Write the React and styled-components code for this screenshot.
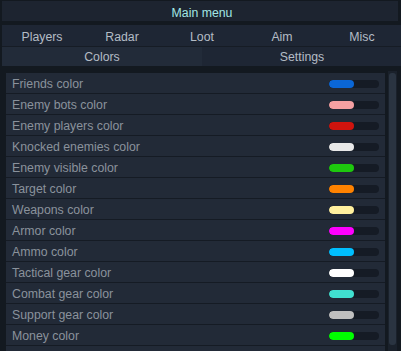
import React from "react";
import styled, {createGlobalStyle} from "styled-components";

const GlobalStyle = createGlobalStyle`
  html, body {
    margin: 0;
    padding: 0;
    background: #131920;
  }
  * {
    box-sizing: border-box;
  }
`;

const Window = styled.div`
  width: 401px;
  height: 351px;
  overflow: hidden;
  background-color: #131920;
  font-family: "Liberation Sans", Arial, sans-serif;
  font-size: 12.3px;
  display: flex;
  flex-direction: column;
`;

const TitleBar = styled.div`
  margin: 1px 0 0 2px;
  width: 396px;
  height: 20px;
  background-color: #1d2430;
  color: #a3e6e4;
  display: flex;
  align-items: center;
  justify-content: center;
  padding: 3px 0 0 4px;
`;

const TabRow = styled.div`
  margin: 4px 0 0 2px;
  width: 400px;
  height: ${({h}) => h}px;
  padding-top: ${({pt}) => pt}px;
  display: grid;
  grid-template-columns: repeat(${({cols}) => cols}, 1fr);
  background-color: #1e2634;
  border-bottom: ${({line}) => (line ? "1px solid #161c25" : "none")};
`;

const SubTabRow = styled(TabRow)`
  margin-top: 0;
  padding-top: 0;
`;

const Tab = styled.div`
  display: flex;
  align-items: center;
  justify-content: center;
  color: #b4bcc5;
  padding-top: 1px;
  background-color: ${({active}) => (active ? "#222b39" : "transparent")};
`;

const Body = styled.div`
  flex: 1;
  display: flex;
  gap: 3px;
  margin-top: 5px;
  padding-left: 6px;
  min-height: 0;
`;

const List = styled.div`
  width: 379px;
  overflow: hidden;
  background-color: #222a37;
  border-top: 2px solid #131920;
`;

const Row = styled.div`
  height: 21px;
  display: flex;
  align-items: center;
  justify-content: space-between;
  padding: 2px 6px 0 6px;
  background-color: #222a37;
  border-bottom: 1px solid #151b24;
  color: #8a929c;
`;

const Swatch = styled.div`
  width: 50px;
  height: 8px;
  margin-top: -1px;
  border-radius: 4px;
  background-color: #151b25;
  overflow: hidden;
  display: flex;
`;

const SwatchFill = styled.div`
  width: 25px;
  height: 100%;
  border-radius: 4px;
  background-color: ${({color}) => color};
`;

const ScrollTrack = styled.div`
  width: 9px;
  background-color: #1a212b;
  padding: 2px 1px;
`;

const ScrollThumb = styled.div`
  height: 272px;
  border-radius: 3px;
  background-color: #2a3441;
`;

const tabs = ["Players", "Radar", "Loot", "Aim", "Misc"];

const colors = [
  ["Friends color", "#0a66d6"],
  ["Enemy bots color", "#f5a0a2"],
  ["Enemy players color", "#d0140e"],
  ["Knocked enemies color", "#e8e8e8"],
  ["Enemy visible color", "#1ec80e"],
  ["Target color", "#ff8200"],
  ["Weapons color", "#fff09e"],
  ["Armor color", "#ff00ff"],
  ["Ammo color", "#00bfff"],
  ["Tactical gear color", "#ffffff"],
  ["Combat gear color", "#40e0d0"],
  ["Support gear color", "#c0c0c0"],
  ["Money color", "#00ff00"],
];

export default function App() {
  return (
    <>
      <GlobalStyle />
      <Window>
        <TitleBar>Main menu</TitleBar>
        <TabRow cols={5} h={22} pt={1} line>
          {tabs.map((t) => (
            <Tab key={t}>{t}</Tab>
          ))}
        </TabRow>
        <SubTabRow cols={2} h={19}>
          <Tab active>Colors</Tab>
          <Tab>Settings</Tab>
        </SubTabRow>
        <Body>
          <List>
            {colors.map(([name, c]) => (
              <Row key={name}>
                <span>{name}</span>
                <Swatch>
                  <SwatchFill color={c} />
                </Swatch>
              </Row>
            ))}
          </List>
          <ScrollTrack>
            <ScrollThumb />
          </ScrollTrack>
        </Body>
      </Window>
    </>
  );
}
